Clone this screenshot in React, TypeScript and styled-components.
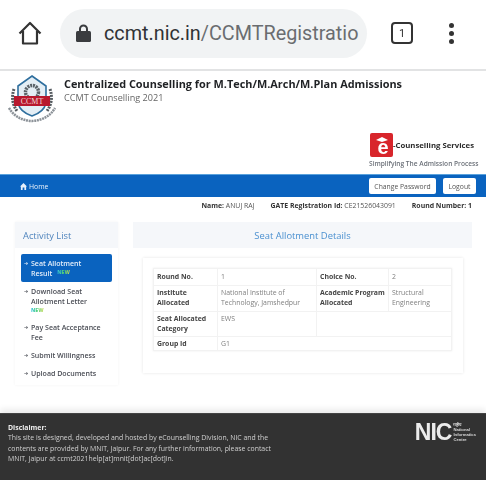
import React from "react";
import styled, { createGlobalStyle } from "styled-components";

const GlobalStyle = createGlobalStyle`
  html, body { margin: 0; padding: 0; background: #fff; }
  body { font-family: "Open Sans", "Liberation Sans", sans-serif; }
  * { box-sizing: border-box; }
`;

const Page = styled.div`
  width: 486px;
  height: 480px;
  overflow: hidden;
  display: flex;
  flex-direction: column;
  filter: blur(0.4px);
`;

const BrowserBar = styled.div`
  height: 71px;
  flex: none;
  display: flex;
  align-items: center;
  padding: 0 0 3px 18px;
  background: #fff;
  border-bottom: 2px solid #e2e3e4;
`;

const HomeIcon = styled.svg`
  width: 24px;
  height: 24px;
  flex: none;
`;

const UrlPill = styled.div`
  width: 307px;
  height: 49px;
  margin-left: 18px;
  padding-left: 16px;
  display: flex;
  align-items: center;
  gap: 13px;
  border-radius: 25px;
  background: #f1f3f4;
  overflow: hidden;
`;

const UrlText = styled.div`
  font-family: Roboto, sans-serif;
  font-size: 19.8px;
  white-space: nowrap;
  color: #6a6d70;
  b { font-weight: 400; color: #303235; }
`;

const TabCount = styled.div`
  width: 22px;
  height: 22px;
  margin-left: 24px;
  flex: none;
  border: 2.5px solid #333;
  border-radius: 4px;
  display: flex;
  align-items: center;
  justify-content: center;
  font-family: Roboto, sans-serif;
  font-size: 11px;
  color: #333;
`;

const Dots = styled.div`
  margin-left: 36px;
  display: flex;
  flex-direction: column;
  gap: 3px;
  span { width: 5px; height: 5px; border-radius: 50%; background: #333; }
`;

const Brand = styled.header`
  height: 103px;
  flex: none;
  padding: 4px 7px 0 8px;
  display: flex;
  flex-direction: column;
`;

const BrandTop = styled.div`
  display: flex;
  gap: 8px;
`;

const BrandText = styled.div`
  padding-top: 1px;
  h1 { margin: 0; font-size: 10.9px; line-height: 15px; font-weight: 700; color: #1f2124; white-space: nowrap; }
  p { margin: 0; font-size: 9.1px; line-height: 14px; color: #666; }
`;

const ServiceBox = styled.div`
  margin: 10px 0 0 auto;
  width: 110px;
`;

const ServiceRow = styled.div`
  display: flex;
  align-items: center;
  padding-left: 1px;
  font-size: 7.75px;
  font-weight: 700;
  color: #2b2b2b;
  white-space: nowrap;
`;

const ServiceTag = styled.div`
  font-size: 6.6px;
  font-weight: 600;
  color: #6b7078;
  margin-top: 2px;
  white-space: nowrap;
`;

const Nav = styled.nav`
  height: 23px;
  flex: none;
  background: #0a63bf;
  border-top: 1px solid #5aa2dc;
  display: flex;
  align-items: center;
  padding: 0 10px 0 20px;
`;

const NavLink = styled.a`
  display: flex;
  align-items: center;
  gap: 2px;
  font-size: 6.9px;
  color: #e8f0fa;
  margin-right: auto;
`;

const NavButton = styled.button<{ $wide?: boolean }>`
  height: 16px;
  width: ${(p) => (p.$wide ? "67px" : "33px")};
  margin-left: ${(p) => (p.$wide ? "0" : "7px")};
  padding: 0;
  border: none;
  border-radius: 2px;
  background: #fff;
  font-family: inherit;
  font-size: 6.8px;
  color: #555;
`;

const InfoRow = styled.div`
  height: 25px;
  flex: none;
  display: flex;
  justify-content: flex-end;
  align-items: center;
  gap: 16px;
  padding: 0 14px 9px 0;
  font-size: 6.9px;
  color: #555;
  white-space: nowrap;
  b { color: #333; font-weight: 700; }
`;

const Content = styled.div`
  flex: 1;
  display: flex;
  align-items: flex-start;
  gap: 15px;
  padding-left: 15px;
`;

const Sidebar = styled.aside`
  width: 103px;
  height: 163px;
  flex: none;
  box-shadow: 0 0 3px #f3f3f3;
`;

const SideTitle = styled.h2`
  height: 26px;
  margin: 0;
  padding-left: 8px;
  display: flex;
  align-items: center;
  background: #f5f7fa;
  font-size: 9.3px;
  font-weight: 400;
  color: #4f84bd;
`;

const SideList = styled.ul`
  list-style: none;
  margin: 6px 6px 0;
  padding: 0;
  display: flex;
  flex-direction: column;
`;

const SideItem = styled.li<{ $active?: boolean }>`
  position: relative;
  padding: 4px 4px 4px 10px;
  border-radius: 2px;
  background: ${(p) => (p.$active ? "#0a63bf" : "transparent")};
  color: ${(p) => (p.$active ? "#e6effa" : "#4a4d55")};
  font-size: 7.05px;
  line-height: 10px;
  font-weight: 600;
  &::before {
    content: "➔";
    position: absolute;
    left: 3px;
    top: 4px;
    font-family: "DejaVu Sans", sans-serif;
    font-size: 5px;
    font-weight: 400;
    color: currentColor;
  }
`;

const NewBadge = styled.span<{ $below?: boolean }>`
  display: ${(p) => (p.$below ? "block" : "inline-block")};
  width: 14px;
  margin-left: ${(p) => (p.$below ? "0" : "5px")};
  font-size: 5.2px;
  line-height: 8px;
  font-weight: 800;
  vertical-align: top;
  background: linear-gradient(90deg, #35c4e0, #4fd06a, #e6dc50);
  -webkit-background-clip: text;
  background-clip: text;
  color: transparent;
`;

const Main = styled.main`
  width: 339px;
  flex: none;
`;

const MainTitle = styled.h2`
  height: 26px;
  margin: 0;
  display: flex;
  align-items: center;
  justify-content: center;
  background: #f5f7fa;
  font-size: 9.4px;
  font-weight: 400;
  color: #4a90d0;
`;

const Card = styled.section`
  width: 320px;
  height: 115px;
  margin: 10px 0 0 10px;
  padding: 10px 12px 0 10px;
  background: #fff;
  box-shadow: 0 0 3px #e4e4e4;
`;

const Table = styled.table`
  width: 298px;
  border-collapse: collapse;
  table-layout: fixed;
  box-shadow: 0 0 2px #ececec;
  font-size: 6.9px;
  line-height: 10px;
  td, th {
    padding: 2px 3px 2.5px;
    border: 1px solid #f2f2f2;
    vertical-align: top;
    text-align: left;
  }
  tr:first-child td, tr:first-child th { padding: 3px 3px; }
  tr:last-child td, tr:last-child th { padding: 2px 3px 1px; }
  th { font-weight: 700; color: #444; }
  td { color: #808080; }
`;

const Footer = styled.footer`
  height: 67px;
  flex: none;
  display: flex;
  justify-content: space-between;
  padding: 9px 10px 0 8px;
  background: #323232;
  color: #d0d0d0;
  font-size: 6.9px;
  line-height: 10.4px;
  border-top: 1px solid #444;
  box-shadow: 0 -4px 6px #ececec;
  p { margin: 0; width: 270px; }
  b { display: block; color: #eee; }
`;

const NicLogo = styled.div`
  display: flex;
  align-items: center;
  height: 18px;
  gap: 2px;
  strong { font-family: "Liberation Sans", sans-serif; font-size: 23px; font-weight: 700; color: #ececec; letter-spacing: -1px; }
  span { font-family: "Liberation Sans", sans-serif; font-size: 4.2px; line-height: 5px; font-weight: 700; color: #d8d8d8; }
`;

function CcmtLogo() {
  return (
    <svg width="48" height="48" viewBox="0 0 48 48" style={{ flex: "none" }}>
      <path d="M1 33 Q8 45 24 46 Q40 45 47 33" fill="none" stroke="#8d9399" strokeWidth="2.5" strokeDasharray="2 0.7" />
      <path d="M6 14 Q2 26 9 36" fill="none" stroke="#555b60" strokeWidth="3" strokeDasharray="2 1" />
      <path d="M42 14 Q46 26 39 36" fill="none" stroke="#555b60" strokeWidth="3" strokeDasharray="2 1" />
      <path d="M24 1 L38 11 V28 Q36 37 24 41 Q12 37 10 28 V11 Z" fill="#e4eef5" stroke="#2f6f9e" strokeWidth="1.6" />
      <circle cx="24" cy="17" r="6.5" fill="none" stroke="#5a6268" strokeWidth="3.5" strokeDasharray="2 0.8" />
      <rect x="6" y="21" width="36" height="10" fill="#b8182e" />
      <text x="24" y="29" textAnchor="middle" fontSize="8" fontFamily="Liberation Serif, serif" fill="#f0d8d8">CCMT</text>
    </svg>
  );
}

function ELogo() {
  return (
    <svg width="23" height="24" viewBox="0 0 23 24" style={{ flex: "none" }}>
      <rect width="23" height="24" rx="2" fill="#d8252b" />
      <text x="13" y="21" textAnchor="middle" fontSize="20" fontWeight="700" fontFamily="Liberation Sans, sans-serif" fill="#fff">e</text>
      <path d="M6 7 L12 4 L18 7 L12 9 Z" fill="#fff" />
    </svg>
  );
}

export default function App() {
  return (
    <Page>
      <GlobalStyle />
      <BrowserBar>
        <HomeIcon viewBox="0 0 24 24" fill="none" stroke="#333" strokeWidth="2.2" strokeLinejoin="round">
          <path d="M1.5 12.5 L12 2 L22.5 12.5 M5 10 V22.5 H19 V10" />
        </HomeIcon>
        <UrlPill>
          <svg width="15" height="18" viewBox="0 0 15 18" style={{ flex: "none" }}>
            <path d="M4 8 V5 a3.5 3.5 0 0 1 7 0 V8" fill="none" stroke="#3a3c3f" strokeWidth="2" />
            <rect y="7" width="15" height="11" rx="1.5" fill="#3a3c3f" />
          </svg>
          <UrlText><b>ccmt.nic.in</b>/CCMTRegistratio</UrlText>
        </UrlPill>
        <TabCount>1</TabCount>
        <Dots><span /><span /><span /></Dots>
      </BrowserBar>
      <Brand>
        <BrandTop>
          <CcmtLogo />
          <BrandText>
            <h1>Centralized Counselling for M.Tech/M.Arch/M.Plan Admissions</h1>
            <p>CCMT Counselling 2021</p>
          </BrandText>
        </BrandTop>
        <ServiceBox>
          <ServiceRow><ELogo />-Counselling Services</ServiceRow>
          <ServiceTag>Simplifying The Admission Process</ServiceTag>
        </ServiceBox>
      </Brand>
      <Nav>
        <NavLink>
          <svg width="7" height="7" viewBox="0 0 8 8"><path d="M4 0 L8 4 H7 V8 H5 V5 H3 V8 H1 V4 H0 Z" fill="#e8f0fa" /></svg>
          Home
        </NavLink>
        <NavButton $wide>Change Password</NavButton>
        <NavButton>Logout</NavButton>
      </Nav>
      <InfoRow>
        <span><b>Name:</b> ANUJ RAJ</span>
        <span><b>GATE Registration Id:</b> CE21526043091</span>
        <span><b>Round Number: 1</b></span>
      </InfoRow>
      <Content>
        <Sidebar>
          <SideTitle>Activity List</SideTitle>
          <SideList>
            <SideItem $active>Seat Allotment<br />Result<NewBadge>NEW</NewBadge></SideItem>
            <SideItem>Download Seat<br />Allotment Letter<NewBadge $below>NEW</NewBadge></SideItem>
            <SideItem>Pay Seat Acceptance<br />Fee</SideItem>
            <SideItem>Submit Willingness</SideItem>
            <SideItem>Upload Documents</SideItem>
          </SideList>
        </Sidebar>
        <Main>
          <MainTitle>Seat Allotment Details</MainTitle>
          <Card>
            <Table>
              <colgroup>
                <col style={{ width: 64 }} />
                <col style={{ width: 99 }} />
                <col style={{ width: 72 }} />
                <col style={{ width: 63 }} />
              </colgroup>
              <tbody>
                <tr><th>Round No.</th><td>1</td><th>Choice No.</th><td>2</td></tr>
                <tr><th>Institute Allocated</th><td>National Institute of Technology, Jamshedpur</td><th>Academic Program Allocated</th><td>Structural Engineering</td></tr>
                <tr><th>Seat Allocated Category</th><td>EWS</td><td colSpan={2} /></tr>
                <tr><th>Group Id</th><td colSpan={3}>G1</td></tr>
              </tbody>
            </Table>
          </Card>
        </Main>
      </Content>
      <Footer>
        <p><b>Disclaimer:</b>This site is designed, developed and hosted by eCounselling Division, NIC and the contents are provided by MNIT, Jaipur. For any further information, please contact MNIT, Jaipur at ccmt2021help[at]mnit[dot]ac[dot]in.</p>
        <NicLogo>
          <strong>NIC</strong>
          <span>राष्ट्रीय<br />National<br />Informatics<br />Centre</span>
        </NicLogo>
      </Footer>
    </Page>
  );
}
